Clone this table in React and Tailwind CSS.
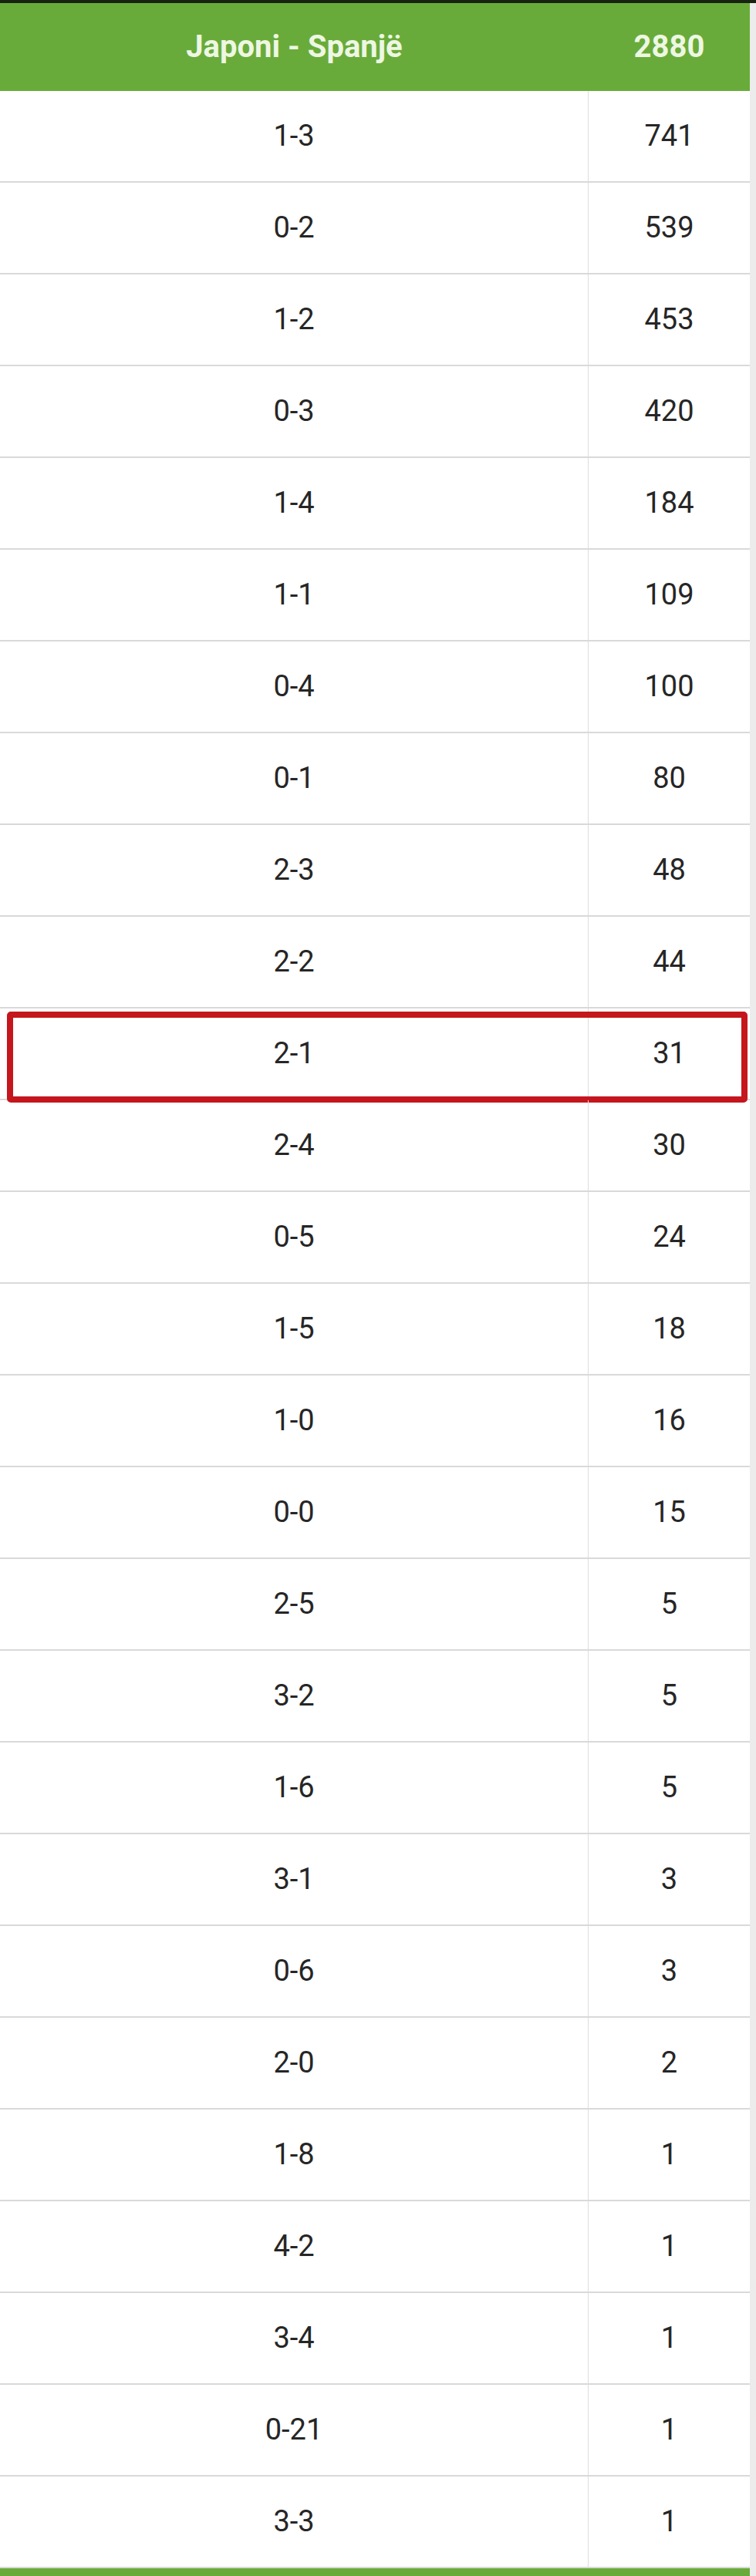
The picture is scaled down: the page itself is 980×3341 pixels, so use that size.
const rows = [
  ["1-3", 741],
  ["0-2", 539],
  ["1-2", 453],
  ["0-3", 420],
  ["1-4", 184],
  ["1-1", 109],
  ["0-4", 100],
  ["0-1", 80],
  ["2-3", 48],
  ["2-2", 44],
  ["2-1", 31],
  ["2-4", 30],
  ["0-5", 24],
  ["1-5", 18],
  ["1-0", 16],
  ["0-0", 15],
  ["2-5", 5],
  ["3-2", 5],
  ["1-6", 5],
  ["3-1", 3],
  ["0-6", 3],
  ["2-0", 2],
  ["1-8", 1],
  ["4-2", 1],
  ["3-4", 1],
  ["0-21", 1],
  ["3-3", 1],
];

export default function App() {
  return (
    <div className="w-[980px] h-[3341px] bg-[#ececec] font-['Roboto',sans-serif] flex flex-col overflow-hidden">
      <div className="h-[4px] bg-[#17230f] shrink-0" />
      <div className="w-[972px] flex flex-col bg-white">
        <div className="h-[114px] flex bg-[#69ab3a] text-[#edf7e2] font-bold text-[40px]">
          <div className="w-[763px] flex items-center justify-center">Japoni - Spanjë</div>
          <div className="flex-1 flex items-center justify-center">2880</div>
        </div>
        {rows.map(([score, count], i) => (
          <div
            key={i}
            className="relative h-[119px] flex border-b-2 border-[#d9d9d9] text-[#262626] text-[38px]"
          >
            <div className="w-[763px] flex items-center justify-center border-r border-[#dcdcdc]">
              {score}
            </div>
            <div className="flex-1 flex items-center justify-center">{count}</div>
            {score === "2-1" && (
              <div className="absolute left-[9px] right-[3px] top-[4px] h-[118px] border-[8px] border-[#c4161c] rounded-[5px]" />
            )}
          </div>
        ))}
        <div className="h-[12px] bg-[#69ab3a]" />
      </div>
    </div>
  );
}
